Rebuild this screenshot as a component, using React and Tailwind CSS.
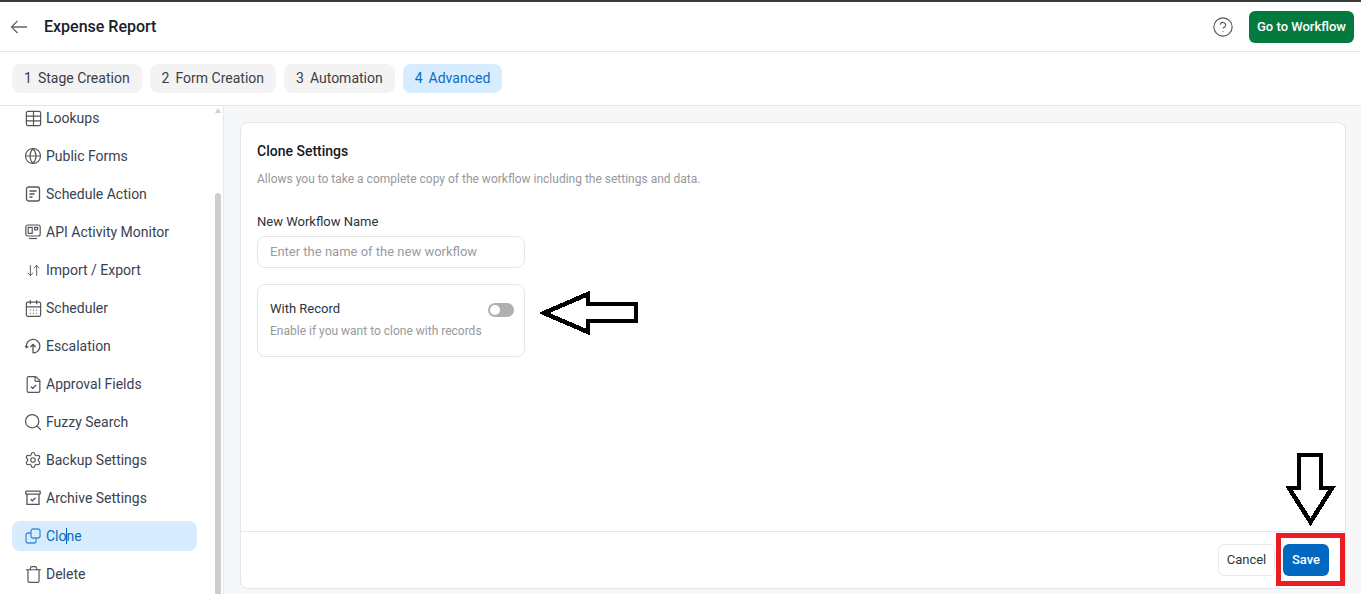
import { CalendarDays, CircleHelp, FileCheck, Globe, Search, Settings, Table, Trash, ArrowDownUp } from 'lucide-react';

function BackIcon() {
  return (
    <svg width="18" height="14" viewBox="0 0 18 14" fill="none" stroke="currentColor" strokeWidth="1.3">
      <path d="M17 7H1.5M7.5 1 1.5 7l6 6" />
    </svg>
  );
}

function ScheduleIcon() {
  return (
    <svg width="16" height="16" viewBox="0 0 16 16" fill="none" stroke="currentColor" strokeWidth="1.3">
      <rect x="1.5" y="1" width="13" height="14" rx="2" />
      <path d="M4.5 5h7M4.5 8h5M4.5 11h3" />
    </svg>
  );
}

function MonitorIcon() {
  return (
    <svg width="16" height="16" viewBox="0 0 16 16" fill="none" stroke="currentColor" strokeWidth="1.2">
      <rect x="0.8" y="1" width="14.4" height="11" rx="2" />
      <rect x="3.2" y="3.4" width="4" height="6" />
      <rect x="9.6" y="3.4" width="3" height="2.4" />
      <path d="M4 14.5h8" />
    </svg>
  );
}

function EscalationIcon() {
  return (
    <svg width="16" height="16" viewBox="0 0 16 16" fill="none" stroke="currentColor" strokeWidth="1.3">
      <path d="M1.4 9.4A6.8 6.8 0 1 1 8 15" />
      <path d="M0.4 7.6 1.4 9.6 3.4 8.4" />
      <path d="M8 15V6.5M5.4 9 8 6.5 10.6 9" />
    </svg>
  );
}

function ArchiveIcon() {
  return (
    <svg width="16" height="16" viewBox="0 0 16 16" fill="none" stroke="currentColor" strokeWidth="1.3">
      <rect x="0.8" y="1.2" width="14.4" height="3" rx="0.6" />
      <path d="M2 4.2V14.4h12V4.2" />
      <path d="m5.6 9.2 1.7 1.6 3.2-3" />
    </svg>
  );
}

function CloneIcon() {
  return (
    <svg width="16" height="16" viewBox="0 0 16 16" fill="none" stroke="currentColor" strokeWidth="1.3">
      <rect x="6" y="1" width="9" height="9" rx="2" />
      <path d="M6 5H3a2 2 0 0 0-2 2v6a2 2 0 0 0 2 2h6a2 2 0 0 0 2-2v-3" />
    </svg>
  );
}

const stages = [
  { n: 1, label: 'Stage Creation' },
  { n: 2, label: 'Form Creation' },
  { n: 3, label: 'Automation' },
  { n: 4, label: 'Advanced', active: true },
];

const iconProps = { strokeWidth: 1.5, className: 'shrink-0' };

const menu = [
  { label: 'Lookups', icon: <Table size={19} {...iconProps} /> },
  { label: 'Public Forms', icon: <Globe size={18} {...iconProps} /> },
  { label: 'Schedule Action', icon: <ScheduleIcon /> },
  { label: 'API Activity Monitor', icon: <MonitorIcon /> },
  { label: 'Import / Export', icon: <ArrowDownUp size={15} {...iconProps} /> },
  { label: 'Scheduler', icon: <CalendarDays size={19} {...iconProps} /> },
  { label: 'Escalation', icon: <EscalationIcon /> },
  { label: 'Approval Fields', icon: <FileCheck size={19} {...iconProps} /> },
  { label: 'Fuzzy Search', icon: <Search size={20} {...iconProps} /> },
  { label: 'Backup Settings', icon: <Settings size={18} {...iconProps} /> },
  { label: 'Archive Settings', icon: <ArchiveIcon /> },
  { label: 'Clone', icon: <CloneIcon />, active: true },
  { label: 'Delete', icon: <Trash size={19} {...iconProps} /> },
];

export default function App() {
  return (
    <div className="relative flex h-[594px] flex-col overflow-hidden bg-white font-['Roboto',sans-serif] text-[#2c3440]">
      <div className="h-0.5 bg-[#3b3b3b]" />

      {/* Header */}
      <header className="flex h-[50px] items-center justify-between border-b border-[#e6e6e6] pr-[7px] pl-[10px]">
        <div className="flex items-center gap-[16px]">
          <span className="text-[#666]"><BackIcon /></span>
          <span className="text-base font-medium text-[#1b2027]">Expense Report</span>
        </div>
        <div className="flex items-center gap-[16px]">
          <CircleHelp size={22} strokeWidth={1.2} className="-mr-px text-[#555]" />
          <button className="flex h-8 w-[105px] items-center justify-center rounded-md bg-[#047a3e] text-[13px] font-medium text-white">
            Go to Workflow
          </button>
        </div>
      </header>

      {/* Stage tabs */}
      <div className="flex h-[54px] items-center gap-2 border-b border-[#e6e6e6] pb-px pl-3">
        {stages.map(s => (
          <div
            key={s.n}
            className={`flex h-[29px] items-center gap-1.5 rounded-lg px-3 text-sm ${s.active ? 'bg-[#d8ecff] text-[#0a6cc4]' : 'bg-[#f3f3f3] text-[#3a4048]'}`}
          >
            <span>{s.n}</span>
            <span>{s.label}</span>
          </div>
        ))}
      </div>

      <div className="flex min-h-0 flex-1">
        {/* Sidebar */}
        <aside className="relative w-[224px] shrink-0 overflow-hidden border-r border-[#e9e9e9] bg-white">
          <nav className="-mt-[3px] flex w-[197px] flex-col gap-2 pl-3">
            {menu.map(item => (
              <div
                key={item.label}
                className={`flex h-[30px] shrink-0 items-center gap-[5px] rounded-lg pl-[13px] text-sm ${item.active ? 'bg-[#d8ecff] text-[#0a6cc4]' : 'text-[#3a4250]'}`}
              >
                <span className={`flex w-4 justify-center ${item.active ? 'text-[#3f8fd8]' : 'text-[#555]'}`}>{item.icon}</span>
                <span className="relative">
                  {item.label}
                  {item.active && <span className="absolute top-[2px] left-[20px] h-4 w-px bg-[#0a5fb0]" />}
                </span>
              </div>
            ))}
          </nav>
          {/* Scrollbar */}
          <div className="absolute top-[2px] left-[215px] h-0 w-0 border-x-[3px] border-b-[5px] border-x-transparent border-b-[#d0d0d0]" />
          <div className="absolute top-[87px] left-[215px] h-[402px] w-[6px] rounded-full bg-[#cdcdcd]" />
        </aside>

        {/* Main */}
        <main className="flex min-w-0 flex-1 bg-[#f6f7f9] pt-4 pr-[15px] pb-[5px] pl-4">
          <section className="flex flex-1 flex-col rounded-lg border border-[#e6e6e6] bg-white">
            <div className="flex-1 pt-[18px] pl-4">
              <h2 className="text-sm leading-[20px] font-medium text-[#14181f]">Clone Settings</h2>
              <p className="mt-[10px] text-xs leading-[16px] text-[#97989c]">
                Allows you to take a complete copy of the workflow including the settings and data.
              </p>
              <label className="mt-[27px] block text-[13px] leading-[16px] text-[#2c3440]">New Workflow Name</label>
              <input
                readOnly
                placeholder="Enter the name of the new workflow"
                className="mt-[6px] block h-8 w-[268px] rounded-lg border border-[#e6e6e6] px-3 pb-[2px] text-[13px] outline-none placeholder:text-[#9a9b9f]"
              />
              <div className="mt-4 flex h-[73px] w-[268px] items-start justify-between rounded-lg border border-[#e6e6e6] pt-4 pr-[10px] pl-3">
                <div>
                  <div className="text-[13px] leading-[16px] text-[#2c3440]">With Record</div>
                  <div className="mt-[6px] text-xs leading-[16px] text-[#97989c]">Enable if you want to clone with records</div>
                </div>
                <div className="mt-[2px] flex h-[14px] w-[26px] items-center rounded-full bg-[#b0b0b0] px-0.5">
                  <div className="h-2.5 w-2.5 rounded-full bg-white" />
                </div>
              </div>
            </div>
            <div className="flex h-[57px] items-center justify-end gap-2 border-t border-[#e6e6e6] pr-4">
              <button className="h-8 w-[57px] rounded-md border border-[#e8e8e8] bg-white text-[13px] text-[#2c3440]">Cancel</button>
              <button className="h-8 w-[46px] rounded-md bg-[#0068c1] text-[13px] font-medium text-white">Save</button>
            </div>
          </section>
        </main>
      </div>

      {/* Annotations drawn over the screenshot */}
      <svg className="absolute top-[290px] left-[540px]" width="100" height="46" viewBox="0 0 100 46" fill="white" stroke="black" strokeWidth="4.5" shapeRendering="crispEdges">
        <path d="M4 23 48 4V14H96V31H48V42Z" />
      </svg>
      <svg className="absolute top-[451px] left-[1286px]" width="50" height="76" viewBox="0 0 50 76" fill="white" stroke="black" strokeWidth="4.5" shapeRendering="crispEdges">
        <path d="M13 4H35V37H46L24.5 71 3 37H13Z" />
      </svg>
      <div className="absolute top-[533px] left-[1276px] h-[53px] w-[69px] border-[5px] border-[#ed1c24]" />
    </div>
  );
}
